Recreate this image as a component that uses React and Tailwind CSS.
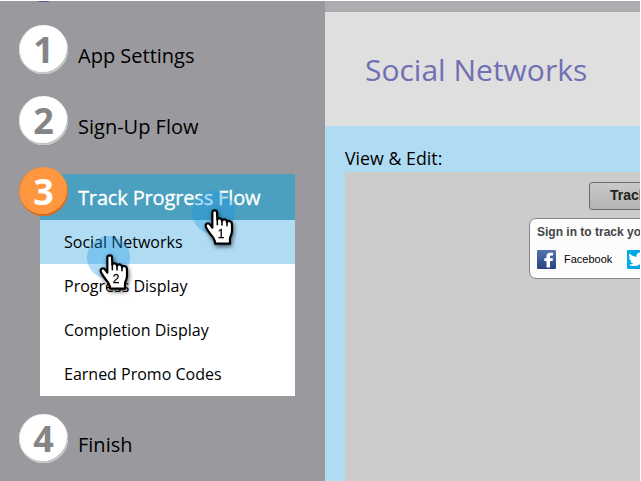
const sans = "font-['Open_Sans','Noto_Sans',sans-serif]";
const arial = "font-['Liberation_Sans',Arial,sans-serif]";

function StepBadge({ n, active }) {
  return (
    <span
      className={
        "relative z-10 flex h-[49px] w-[49px] shrink-0 items-center justify-center rounded-full pt-[1px] text-[36px] leading-none font-bold " +
        (active
          ? "bg-[#ff9640] text-white shadow-[inset_-1px_-2px_0_#cf6d24,inset_1px_0_0_#e58337]"
          : "bg-white text-[#858585] shadow-[inset_-1px_-2px_0_#c4c4c6,inset_1px_0_0_#dcdcde]")
      }
    >
      {n}
    </span>
  );
}

function Step({ n, label }) {
  return (
    <div className="flex h-[49px] pl-[19px]">
      <StepBadge n={n} />
      <span className="ml-[10px] pt-[17px] text-[20px] leading-[28px] text-black">{label}</span>
    </div>
  );
}

function Pointer({ n, className }) {
  return (
    <div className={"absolute z-20 h-[64px] w-[54px] " + className}>
      <div className="h-[43px] w-[43px] rounded-full bg-[#1699e6]/34" />
      <svg
        className="absolute top-[16px] left-[11px] overflow-visible drop-shadow-[1px_2px_2px_rgba(0,0,0,0.6)]"
        width="34"
        height="42"
        viewBox="70 140 102 126"
      >
        <path
          d="M98 156 Q98 150 105 150 Q112 150 112 156 L113 178 Q115 173 120 174 Q127 174 127 182 Q129 176 135 177 Q142 178 142 186 Q144 180 150 182 Q157 184 157 193 V213 Q156 223 151 232 V250 H106 V244 Q102 231 92 221 Q86 214 79 201 Q76 194 81 190 Q88 187 93 195 L98 202 Z"
          fill="white"
          stroke="black"
          strokeWidth="6.5"
          strokeLinejoin="round"
        />
        <path
          d="M113 176 V193 M127 181 V194 M142 185 V196"
          fill="none"
          stroke="black"
          strokeWidth="4.5"
          strokeLinecap="round"
        />
        <text
          x="124"
          y="233"
          textAnchor="middle"
          fontSize="36"
          fill="black"
          stroke="black"
          strokeWidth="0.8"
          className={arial}
        >
          {n}
        </text>
      </svg>
    </div>
  );
}

const pages = ["Social Networks", "Progress Display", "Completion Display", "Earned Promo Codes"];

function Sidebar() {
  return (
    <aside className="relative h-[480px] w-[325px] shrink-0 overflow-hidden bg-[#9a999e]">
      <div className="absolute -top-[47px] left-[19px] h-[48px] w-[49px] rounded-full bg-[#5b4ea2]" />
      <div className="pt-[24px]">
        <Step n="1" label="App Settings" />
      </div>
      <div className="pt-[22px]">
        <Step n="2" label="Sign-Up Flow" />
      </div>
      <div className="mt-[29px] ml-[40px] w-[255px]">
        <div className="flex h-[46px] bg-[#4b9fbf]">
          <div className="-mt-[7px] -ml-[21px]">
            <StepBadge n="3" active />
          </div>
          <span className="ml-[10px] pt-[10px] text-[20px] leading-[28px] font-medium tracking-[-0.15px] text-white [-webkit-text-stroke:0.3px_white]">
            Track Progress Flow
          </span>
        </div>
        <ul className="bg-white text-[16px] text-black">
          {pages.map((p, i) => (
            <li
              key={p}
              className={"flex h-[44px] items-center pl-[24px] " + (i === 0 ? "bg-[#b0dcf3]" : "")}
            >
              {p}
            </li>
          ))}
        </ul>
      </div>
      <div className="pt-[18px]">
        <Step n="4" label="Finish" />
      </div>
      <Pointer n="1" className="top-[190px] left-[192px]" />
      <Pointer n="2" className="top-[235px] left-[87px]" />
    </aside>
  );
}

function FacebookIcon() {
  return (
    <svg width="19" height="19" viewBox="0 0 19 19" className="shrink-0">
      <defs>
        <linearGradient id="fb" x1="0" y1="0" x2="0" y2="1">
          <stop offset="0" stopColor="#5574ad" />
          <stop offset="1" stopColor="#28437f" />
        </linearGradient>
      </defs>
      <rect width="19" height="19" rx="1" fill="url(#fb)" />
      <path
        d="M9.500 17.500 V11 H7.300 V8.300 H9.500 V6.400 Q9.500 2.800 13.200 2.800 H16 V5.600 H14.400 Q13 5.600 13 6.900 V8.300 H16 L15.600 11 H13 V17.500 Z"
        fill="white"
      />
    </svg>
  );
}

function TwitterIcon() {
  return (
    <svg width="19" height="19" viewBox="0 0 19 19" className="shrink-0">
      <rect width="19" height="19" rx="1" fill="#00a9e6" />
      <path
        transform="translate(1.6 0.9) scale(.69)"
        d="M23.6 4.9a9.6 9.6 0 0 1-2.8.8 4.9 4.9 0 0 0 2.2-2.7 9.9 9.9 0 0 1-3.1 1.2A4.9 4.9 0 0 0 11.5 8.7 14 14 0 0 1 1.4 3.6a4.9 4.9 0 0 0 1.5 6.5 4.9 4.9 0 0 1-2.2-.6 4.9 4.9 0 0 0 3.9 4.9 4.9 4.9 0 0 1-2.2.1 4.900 4.900 0 0 0 4.600 3.400A9.900 9.900 0 0 1 0 19.900 13.900 13.900 0 0 0 7.500 22c9.100 0 14-7.500 14-14v-.6a10 10 0 0 0 2.100-2.500z"
        fill="white"
      />
    </svg>
  );
}

function Preview() {
  return (
    <div className={"h-[309px] overflow-hidden bg-[#cccccc] " + arial}>
      <div className="mt-[10px] ml-[244px] flex h-[28px] w-[120px] items-center rounded-[3px] border border-[#6c6c6c] bg-linear-to-b from-[#c9c9c9] to-[#b3b3b3] pb-[1px] pl-[20px] text-[14px] font-bold whitespace-nowrap text-[#222]">
        Track
      </div>
      <div className="mt-[8px] ml-[184px] h-[61px] w-[240px] rounded-[7px] border border-[#858585] bg-[#fcfcfc] pl-[7px]">
        <div className="mt-[4px] text-[12px] leading-[18px] font-bold whitespace-nowrap text-[#444]">
          Sign in to track your
        </div>
        <div className="mt-[9px] flex items-center text-[11px] text-black">
          <FacebookIcon />
          <span className="ml-[8px] w-[63px]">Facebook</span>
          <TwitterIcon />
        </div>
      </div>
    </div>
  );
}

export default function App() {
  return (
    <div className={"h-[481px] w-[641px] overflow-hidden bg-white pt-px pr-px " + sans}>
      <div className="flex h-[480px]">
        <Sidebar />
        <main className="flex min-w-0 flex-1 flex-col overflow-hidden bg-[#b0dcf3]">
          <div className="h-[11px] bg-[#adacb1]" />
          <header className="flex h-[114px] items-center bg-[#dfdfdf] pl-[40px] text-[30px] text-[#716fb2]">
            Social Networks
          </header>
          <section className="pt-[20px] pl-[20px]">
            <h2 className="h-[26px] text-[17.8px] leading-[24px] text-black">View &amp; Edit:</h2>
            <Preview />
          </section>
        </main>
      </div>
    </div>
  );
}
